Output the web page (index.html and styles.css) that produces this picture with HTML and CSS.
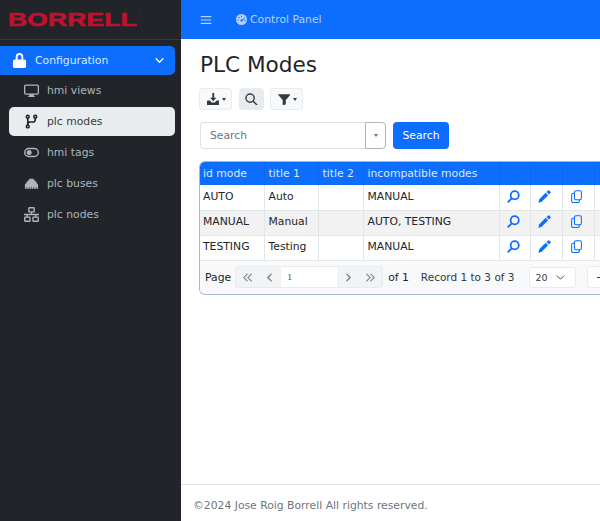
FILE: index.html
```html
<!DOCTYPE html>
<html lang="en">
<head>
<meta charset="utf-8">
<title>PLC Modes</title>
<link rel="stylesheet" href="styles.css">
</head>
<body>
<div class="app">
  <aside class="sidebar">
    <div class="brand"><span class="logo-box"><span class="logo">BORRELL</span></span><span class="reg">®</span></div>
    <nav class="nav">
      <a class="nav-item nav-open">
        <svg class="nav-icon" viewBox="0 0 16 16" fill="#fff"><path d="M8 0a4 4 0 0 0-4 4v3H3a2 2 0 0 0-2 2v5a2 2 0 0 0 2 2h10a2 2 0 0 0 2-2V9a2 2 0 0 0-2-2h-1V4a4 4 0 0 0-4-4zm2 7H6V4a2 2 0 1 1 4 0v3z"/></svg>
        <span class="nav-label">Configuration</span>
        <svg class="nav-chev" viewBox="0 0 16 16" fill="none" stroke="#fff" stroke-width="2.400" stroke-linecap="round" stroke-linejoin="round"><path d="M2 5l6 6 6-6"/></svg>
      </a>
      <a class="nav-item nav-sub">
        <svg class="nav-icon" viewBox="0 0 16 16" fill="currentColor"><path d="M0 3.500a2 2 0 0 1 2-2h12a2 2 0 0 1 2 2v7a2 2 0 0 1-2 2h-3.700c0 .6.200 1.100.5 1.500h.7a.5.500 0 0 1 0 1H4.500a.5.500 0 0 1 0-1h.7c.3-.4.500-.9.500-1.500H2a2 2 0 0 1-2-2v-7zm2-.6a.6.600 0 0 0-.6.600v7c0 .33.270.6.600.6h12a.6.600 0 0 0 .6-.6v-7a.6.600 0 0 0-.6-.6H2z"/></svg>
        <span class="nav-label">hmi views</span>
      </a>
      <a class="nav-item nav-sub nav-active">
        <svg class="nav-icon" viewBox="0 0 16 16" fill="none" stroke="#212529" stroke-width="1.700"><circle cx="4" cy="2.800" r="1.500"/><circle cx="12" cy="2.800" r="1.500"/><circle cx="4" cy="13.200" r="1.500"/><path d="M4 4.300v7.400M12 4.300V6a2.500 2.500 0 0 1-2.500 2.500H6.500A2.500 2.500 0 0 0 4 11"/></svg>
        <span class="nav-label">plc modes</span>
      </a>
      <a class="nav-item nav-sub">
        <svg class="nav-icon" viewBox="0 0 16 16" fill="currentColor"><path fill-rule="evenodd" d="M5 3h6a5 5 0 0 1 0 10H5A5 5 0 0 1 5 3zm0 1.500a3.500 3.500 0 0 0 0 7h6a3.500 3.500 0 0 0 0-7H5z"/><circle cx="5.500" cy="8" r="2.700"/></svg>
        <span class="nav-label">hmi tags</span>
      </a>
      <a class="nav-item nav-sub">
        <svg class="nav-icon" viewBox="0 0 16 16" fill="currentColor"><path d="M1 13.500V9l1.500-1.500V6H4V4.500h1.500V3h5v1.500H12V6h1.500v1.500L15 9v4.500h-1.800v-2h-.5v2h-1.900v-2h-.5v2H8.250v-2h-.5v2H5.700v-2h-.5v2H3.300v-2h-.5v2z"/></svg>
        <span class="nav-label">plc buses</span>
      </a>
      <a class="nav-item nav-sub">
        <svg class="nav-icon" viewBox="0 0 16 16" fill="none" stroke="currentColor" stroke-width="1.500"><rect x="5.200" y=".8" width="5.600" height="4.400" rx=".5"/><rect x=".8" y="10.800" width="5.600" height="4.400" rx=".5"/><rect x="9.600" y="10.800" width="5.600" height="4.400" rx=".5"/><path d="M8 5.200V8M0 8h16M3.500 8v2.800M12.500 8v2.800"/></svg>
        <span class="nav-label">plc nodes</span>
      </a>
    </nav>
  </aside>
  <div class="main">
    <header class="topbar">
      <svg class="burger" viewBox="0 0 16 16" fill="none" stroke="currentColor" stroke-width="1.500" stroke-linecap="round"><path d="M1.500 3.500h13M1.500 8h13M1.500 12.500h13"/></svg>
      <svg class="gauge" viewBox="0 0 16 16" fill="currentColor"><path fill-rule="evenodd" d="M8 0a8 8 0 1 1 0 16A8 8 0 0 1 8 0zm0 2.500a1 1 0 1 0 0 2 1 1 0 0 0 0-2zM4.500 4a1 1 0 1 0 0 2 1 1 0 0 0 0-2zM3 7.500a1 1 0 1 0 0 2 1 1 0 0 0 0-2zm9.900-2.800-4 3.300a1.700 1.700 0 1 0 1 1.200l3.500-3.800a.5.500 0 0 0-.5-.7zM13 8.500a1 1 0 1 0 0 2 1 1 0 0 0 0-2z"/></svg>
      <span class="topbar-title">Control Panel</span>
    </header>
    <main class="content">
      <h1 class="page-title">PLC Modes</h1>
      <div class="toolbar">
        <button class="tool-btn tool-wide">
          <svg class="tool-icon" viewBox="0 0 16 16" fill="#343a40"><path d="M6.800 0h2.400v6H12L8 10.500 4 6h2.800z"/><path d="M1 9.500h2.700L6 12h4l2.300-2.500H15a1 1 0 0 1 1 1V15a1 1 0 0 1-1 1H1a1 1 0 0 1-1-1v-4.500a1 1 0 0 1 1-1z"/></svg>
          <span class="caret"></span>
        </button>
        <button class="tool-btn tool-active">
          <svg class="tool-icon" viewBox="0 0 16 16" fill="none" stroke="#343a40" stroke-width="1.800" stroke-linecap="round"><circle cx="6.500" cy="6.500" r="5.300"/><path d="m10.500 10.500 4.500 4.500"/></svg>
        </button>
        <button class="tool-btn tool-wide">
          <svg class="tool-icon" viewBox="0 0 16 16" fill="#343a40"><path d="M.5 1.500h15a.5.500 0 0 1 .4.800L10 9v5.500l-4 1.300V9L.1 2.300a.5.500 0 0 1 .4-.8z"/></svg>
          <span class="caret"></span>
        </button>
      </div>
      <div class="search-row">
        <div class="search-box">
          <input class="search-input" type="text" placeholder="Search">
          <span class="search-drop"><span class="caret caret-grey"></span></span>
        </div>
        <button class="search-btn">Search</button>
      </div>
      <div class="grid-card">
        <table class="grid">
          <colgroup><col class="c1"><col class="c2"><col class="c3"><col class="c4"><col class="c5"><col class="c6"><col class="c6"><col class="c7"></colgroup>
          <thead>
            <tr><th>id mode</th><th>title 1</th><th>title 2</th><th>incompatible modes</th><th></th><th></th><th></th><th></th></tr>
          </thead>
          <tbody>
            <tr>
              <td>AUTO</td><td>Auto</td><td></td><td>MANUAL</td>
              <td class="act"><svg class="act-icon" viewBox="0 0 16 16" fill="none" stroke="#0d6efd" stroke-width="2.200" stroke-linecap="round"><circle cx="9.500" cy="6.500" r="5"/><path d="M5.500 10.500 1.500 14.500"/></svg></td>
              <td class="act"><svg class="act-icon" viewBox="0 0 16 16" fill="#0d6efd"><path d="M12.100.9a1.500 1.500 0 0 1 2.100 0l.9.9a1.500 1.500 0 0 1 0 2.100l-1.600 1.600-3-3zM9.500 3.500l3 3-8 8-4 1.500 1-4.500z"/></svg></td>
              <td class="act"><svg class="act-icon" viewBox="0 0 16 16" fill="none" stroke="#0d6efd" stroke-width="1.300"><rect x="5.500" y="1" width="8.500" height="11" rx="1.800"/><path d="M5.500 4H4a2 2 0 0 0-2 2v7.500a2 2 0 0 0 2 2h5.500a2 2 0 0 0 2-2V12"/></svg></td>
              <td></td>
            </tr>
            <tr class="striped">
              <td>MANUAL</td><td>Manual</td><td></td><td>AUTO, TESTING</td>
              <td class="act"><svg class="act-icon" viewBox="0 0 16 16" fill="none" stroke="#0d6efd" stroke-width="2.200" stroke-linecap="round"><circle cx="9.500" cy="6.500" r="5"/><path d="M5.500 10.500 1.500 14.500"/></svg></td>
              <td class="act"><svg class="act-icon" viewBox="0 0 16 16" fill="#0d6efd"><path d="M12.100.9a1.500 1.500 0 0 1 2.100 0l.9.9a1.500 1.500 0 0 1 0 2.100l-1.600 1.600-3-3zM9.500 3.500l3 3-8 8-4 1.500 1-4.500z"/></svg></td>
              <td class="act"><svg class="act-icon" viewBox="0 0 16 16" fill="none" stroke="#0d6efd" stroke-width="1.300"><rect x="5.500" y="1" width="8.500" height="11" rx="1.800"/><path d="M5.500 4H4a2 2 0 0 0-2 2v7.500a2 2 0 0 0 2 2h5.500a2 2 0 0 0 2-2V12"/></svg></td>
              <td></td>
            </tr>
            <tr>
              <td>TESTING</td><td>Testing</td><td></td><td>MANUAL</td>
              <td class="act"><svg class="act-icon" viewBox="0 0 16 16" fill="none" stroke="#0d6efd" stroke-width="2.200" stroke-linecap="round"><circle cx="9.500" cy="6.500" r="5"/><path d="M5.500 10.500 1.500 14.500"/></svg></td>
              <td class="act"><svg class="act-icon" viewBox="0 0 16 16" fill="#0d6efd"><path d="M12.100.9a1.500 1.500 0 0 1 2.100 0l.9.9a1.500 1.500 0 0 1 0 2.100l-1.600 1.600-3-3zM9.500 3.500l3 3-8 8-4 1.500 1-4.500z"/></svg></td>
              <td class="act"><svg class="act-icon" viewBox="0 0 16 16" fill="none" stroke="#0d6efd" stroke-width="1.300"><rect x="5.500" y="1" width="8.500" height="11" rx="1.800"/><path d="M5.500 4H4a2 2 0 0 0-2 2v7.500a2 2 0 0 0 2 2h5.500a2 2 0 0 0 2-2V12"/></svg></td>
              <td></td>
            </tr>
          </tbody>
        </table>
        <div class="pager">
          <span class="pager-text">Page</span>
          <div class="pager-group">
            <span class="pager-btn"><svg class="pager-icon" viewBox="0 0 16 16" fill="none" stroke="currentColor" stroke-width="1.500" stroke-linecap="round" stroke-linejoin="round"><path d="M7.500 3 2.500 8l5 5M13.500 3l-5 5 5 5"/></svg></span>
            <span class="pager-btn"><svg class="pager-icon" viewBox="0 0 16 16" fill="none" stroke="currentColor" stroke-width="1.700" stroke-linecap="round" stroke-linejoin="round"><path d="M10.500 3l-5 5 5 5"/></svg></span>
            <span class="pager-num">1</span>
            <span class="pager-btn"><svg class="pager-icon" viewBox="0 0 16 16" fill="none" stroke="currentColor" stroke-width="1.700" stroke-linecap="round" stroke-linejoin="round"><path d="M5.500 3l5 5-5 5"/></svg></span>
            <span class="pager-btn"><svg class="pager-icon" viewBox="0 0 16 16" fill="none" stroke="currentColor" stroke-width="1.500" stroke-linecap="round" stroke-linejoin="round"><path d="M2.500 3l5 5-5 5M8.500 3l5 5-5 5"/></svg></span>
          </div>
          <span class="pager-text pager-of">of 1</span>
          <span class="pager-text pager-rec">Record 1 to 3 of 3</span>
          <span class="pager-size">20<svg class="size-chev" viewBox="0 0 16 16" fill="none" stroke="#343a40" stroke-width="1.600" stroke-linecap="round" stroke-linejoin="round"><path d="M2 5l6 6 6-6"/></svg></span>
          <span class="pager-extra"><span class="pager-dash"></span></span>
        </div>
      </div>
    </main>
    <footer class="footer">©2024 Jose Roig Borrell All rights reserved.</footer>
  </div>
</div>
</body>
</html>
```

FILE: styles.css
```css
* { box-sizing: border-box; }
html, body { margin: 0; height: 100%; overflow: hidden; }
body { font-family: "DejaVu Sans", sans-serif; font-size: 10.800px; color: #212529; background: #fff; }
.app { display: flex; height: 521px; width: 600px; overflow: hidden; }

.sidebar { width: 181px; flex: none; background: #212529; }
.brand { height: 40px; border-bottom: 1px solid #343a40; display: flex; padding: 10px 0 0 8px; }
.logo-box { display: block; width: 130px; height: 20px; flex: none; }
.logo { display: block; width: 88px; font-family: "Liberation Sans", sans-serif; font-weight: 700; font-size: 18px; line-height: 20px; height: 20px; color: #c0112f; -webkit-text-stroke: .6px #c0112f; letter-spacing: .2px; white-space: nowrap; transform: scaleX(1.460); transform-origin: 0 50%; }
.reg { font-size: 4px; line-height: 6px; height: 6px; margin-top: 3px; color: #7a1226; }
.nav { display: flex; flex-direction: column; gap: 2px; padding: 6px 6px 0 0; }
.nav-item { display: flex; align-items: center; height: 29px; flex: none; border-radius: 5px; color: #adb5bd; }
.nav-open { background: #0d6efd; color: #dbe8fd; padding-left: 12px; border-radius: 0 5px 5px 0; margin-bottom: -1px; }
.nav-open .nav-label { margin-left: 8px; flex: 1; }
.nav-icon { width: 15px; height: 15px; flex: none; }
.nav-chev { width: 9px; height: 9px; margin-right: 11px; }
.nav-sub { margin-left: 9px; padding-left: 15px; }
.nav-sub .nav-label { margin-left: 8px; }
.nav-active { background: #e9ecef; color: #343a40; }

.main { flex: 1; min-width: 0; display: flex; flex-direction: column; }
.topbar { height: 39px; flex: none; background: #0d6efd; color: #b6d1fd; display: flex; align-items: center; padding-left: 19px; }
.burger { width: 12px; height: 12px; }
.gauge { width: 11px; height: 11px; margin-left: 24px; }
.topbar-title { margin-left: 3px; }

.content { flex: 1; padding: 12px 0 0 19px; min-height: 0; }
.page-title { margin: 0; font-size: 21.600px; font-weight: 400; line-height: 28px; }
.toolbar { display: flex; gap: 6px; margin: 9px 0 0 -1px; }
.tool-btn { display: flex; align-items: center; justify-content: center; height: 22px; width: 25px; padding: 0; background: #f8f9fa; border: 1px solid #e9ecef; border-radius: 3px; font: inherit; }
.tool-wide { width: 33px; padding-left: 2px; }
.tool-active { background: #e9ecef; margin-left: 1px; }
.tool-icon { width: 12.500px; height: 12.500px; }
.caret { width: 0; height: 0; margin-left: 3px; border-top: 3px solid #343a40; border-left: 2.500px solid transparent; border-right: 2.500px solid transparent; }
.caret-grey { border-top-color: #6c757d; margin-left: 0; }

.search-row { display: flex; gap: 7px; margin-top: 12px; }
.search-box { display: flex; width: 186px; height: 27px; }
.search-input { flex: 1; min-width: 0; border: 1px solid #dee2e6; border-right: 0; border-radius: 4px 0 0 4px; padding: 0 9px; font: inherit; outline: 0; }
.search-input::placeholder { color: #6c757d; opacity: 1; }
.search-drop { width: 21px; display: flex; align-items: center; justify-content: center; border: 1px solid #adb5bd; border-radius: 0 4px 4px 0; background: #fff; }
.search-btn { width: 56px; height: 27px; border: 0; border-radius: 4px; background: #0d6efd; color: #fff; font: inherit; padding: 0; }

.grid-card { margin: 12px 0 0 -1px; width: 402px; border: 1px solid #a9b5e0; border-right: 0; border-radius: 6px 0 0 6px; overflow: hidden; }
.grid { border-collapse: collapse; table-layout: fixed; width: 420px; }
.c1 { width: 64px; } .c2 { width: 54px; } .c3 { width: 45px; } .c4 { width: 136px; } .c5 { width: 31px; } .c6 { width: 32px; } .c7 { width: 26px; }
.grid th { height: 23px; background: #0d6efd; color: #dbe8fd; font-weight: 400; text-align: left; padding: 0 3px 0 4px; border-right: 1px solid #0c67ee; }
.grid td { height: 25px; padding: 0 3px 2px 4px; border-right: 1px solid #e3e6e9; border-bottom: 1px solid #e3e6e9; white-space: nowrap; }
.grid th:first-child, .grid td:first-child { padding-left: 3px; }
.striped td { background: #f2f2f2; }
.grid td.act { text-align: center; padding: 0 3px 3px 0; }
.act-icon { display: inline-block; vertical-align: middle; width: 13px; height: 13px; }

.pager { display: flex; align-items: center; height: 33px; padding-left: 5px; background: #f8f9fa; white-space: nowrap; }
.pager-group { display: flex; flex: none; height: 22px; margin-left: 4px; border: 1px solid #e9ecef; border-radius: 3px; background: #f1f3f5; }
.pager-btn { width: 22.500px; display: flex; align-items: center; justify-content: center; color: #6c757d; }
.pager-icon { width: 11px; height: 11px; }
.pager-num { width: 56px; background: #fff; font-family: "DejaVu Serif", serif; font-size: 8px; line-height: 22px; padding-left: 6px; color: #495057; }
.pager-of { margin-left: 5px; }
.pager-rec { margin-left: 12px; color: #343a40; font-size: 10.500px; }
.pager-size { display: flex; flex: none; align-items: center; width: 47px; height: 21px; margin-left: 14px; padding-left: 6px; background: #fff; border: 1px solid #e9ecef; border-radius: 3px; font-size: 9.500px; color: #343a40; }
.size-chev { width: 9px; height: 9px; margin-left: 8px; }
.pager-extra { display: flex; align-items: center; justify-content: center; flex: none; width: 28px; height: 22px; margin-left: 11px; background: #fff; border: 1px solid #e9ecef; border-radius: 3px; }
.pager-dash { width: 8px; height: 1px; background: #343a40; }

.footer { height: 37px; flex: none; border-top: 1px solid #dee2e6; padding: 14px 0 0 12px; color: #6c757d; }
```
